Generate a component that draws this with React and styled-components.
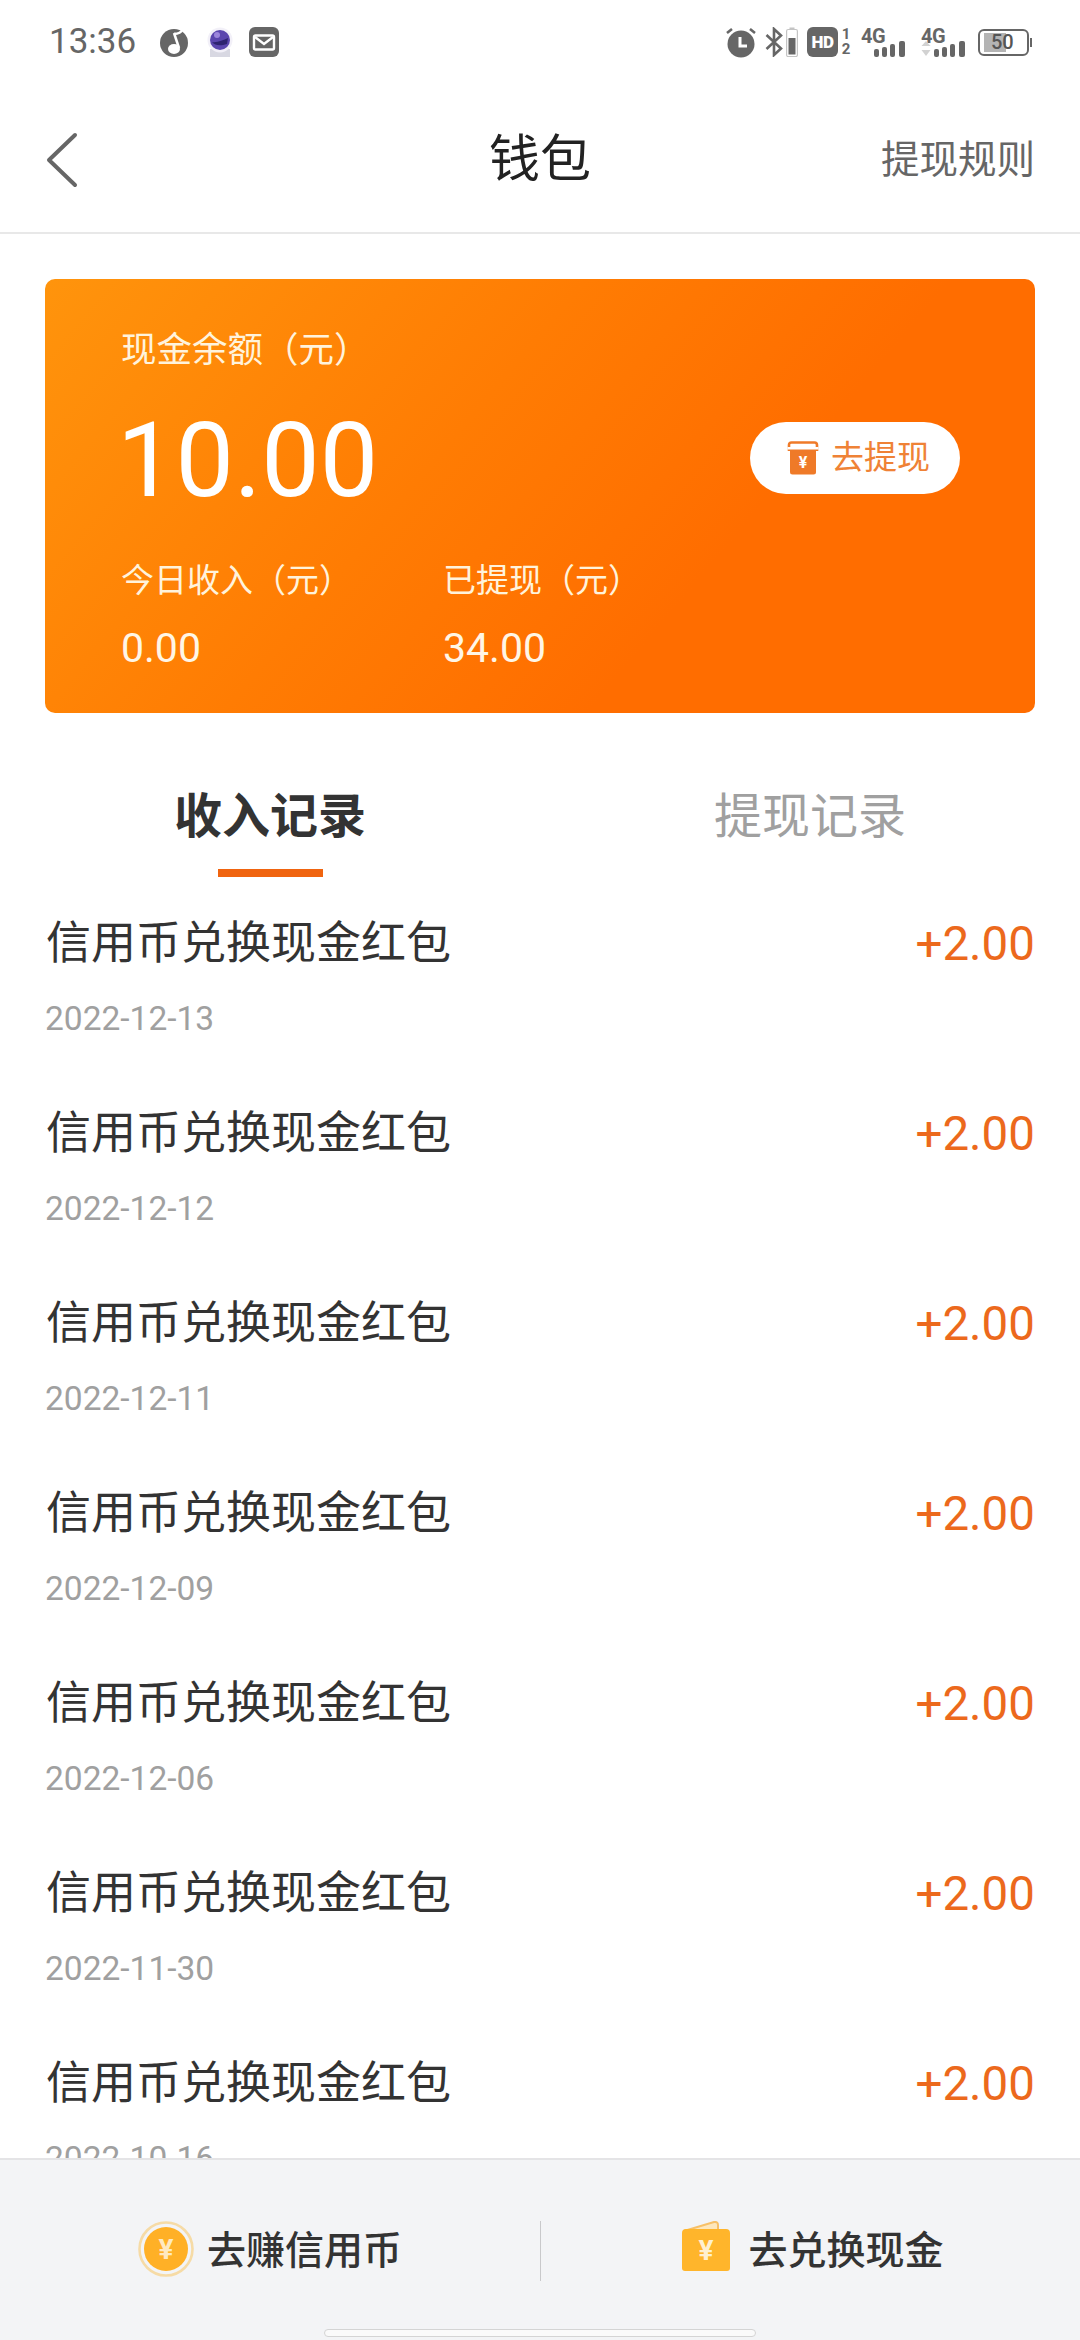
import React from "react";
import styled, { createGlobalStyle } from "styled-components";

const GlobalStyle = createGlobalStyle`
  html, body {
    margin: 0;
    padding: 0;
    background: #ffffff;
  }
  * {
    box-sizing: border-box;
  }
`;

const FONT = `Roboto, "Noto Sans CJK SC", sans-serif`;

const Page = styled.div`
  width: 1080px;
  height: 2340px;
  display: flex;
  flex-direction: column;
  overflow: hidden;
  background: #ffffff;
  font-family: ${FONT};
`;

const StatusBar = styled.div`
  height: 80px;
  flex: none;
  display: flex;
  align-items: center;
  justify-content: space-between;
  padding: 4px 48px 0 49px;
  color: #666666;
`;

const StatusGroup = styled.div`
  display: flex;
  align-items: center;
`;

const Time = styled.span`
  font-size: 35px;
  line-height: 40px;
  margin-right: 23px;
`;

const NetLabel = styled.span`
  position: absolute;
  left: 0;
  top: 0;
  font-size: 20px;
  line-height: 18px;
  font-weight: 700;
  letter-spacing: -0.5px;
`;

const NetSlot = styled.div`
  position: relative;
  width: 48px;
  height: 30px;
  margin-left: ${(p) => p.$gap}px;
`;

const SimNums = styled.div`
  display: flex;
  flex-direction: column;
  align-items: center;
  margin-left: 2px;
  font-size: 15px;
  line-height: 15px;
  font-weight: 700;
  width: 12px;
`;

const HdBadge = styled.span`
  width: 31px;
  height: 30px;
  margin-left: 9px;
  border-radius: 6px;
  background: #666666;
  color: #ffffff;
  font-size: 17px;
  line-height: 30px;
  font-weight: 900;
  text-align: center;
  letter-spacing: -0.5px;
`;

const BatteryBox = styled.div`
  position: relative;
  width: 51px;
  height: 27px;
  margin-left: 9px;
  border: 2px solid #666666;
  border-radius: 6px;
  padding: 2px;
`;

const BatteryFill = styled.div`
  height: 100%;
  width: 52%;
  margin-left: 2px;
  background: #b4b4b4;
`;

const BatteryText = styled.span`
  position: absolute;
  left: 11px;
  top: 0;
  font-size: 20px;
  line-height: 23px;
  font-weight: 500;
  color: #555555;
`;

const BatteryCap = styled.div`
  width: 2px;
  height: 9px;
  margin-left: 1px;
  background: #666666;
`;

const Header = styled.header`
  position: relative;
  height: 154px;
  flex: none;
  display: flex;
  align-items: center;
  justify-content: space-between;
  padding: 8px 45px 0 45px;
  border-bottom: 2px solid #e8e8e8;
`;

const BackButton = styled.div`
  display: flex;
  width: 34px;
`;

const Title = styled.h1`
  position: absolute;
  left: 0;
  right: 0;
  margin: 0;
  text-align: center;
  font-size: 51px;
  line-height: 60px;
  font-weight: 400;
  color: #222222;
  pointer-events: none;
`;

const RuleLink = styled.span`
  font-size: 38.5px;
  line-height: 50px;
  color: #666666;
`;

const Card = styled.section`
  flex: none;
  margin: 45px 45px 0;
  height: 434px;
  padding: 51px 75px 0 76px;
  border-radius: 10px;
  color: #ffffff;
  background: linear-gradient(130deg, #ff940c 0%, #ff7c03 40%, #ff6d00 67%, #ff6d00 100%);
`;

const CardLabel = styled.div`
  font-size: ${(p) => p.$size || 33}px;
  line-height: 40px;
  color: #fff3dc;
`;

const BalanceRow = styled.div`
  display: flex;
  align-items: center;
  justify-content: space-between;
  margin-top: 36px;
  height: 110px;
`;

const Balance = styled.div`
  margin-left: -4px;
  font-size: 104px;
  line-height: 110px;
`;

const WithdrawButton = styled.div`
  display: flex;
  align-items: center;
  height: 72px;
  width: 210px;
  margin-top: -6px;
  padding-left: 36px;
  border-radius: 36px;
  background: #ffffff;
  color: #ef8236;
  font-size: 33px;
`;

const WithdrawText = styled.span`
  margin-left: 11px;
  line-height: 40px;
`;

const Stats = styled.div`
  display: grid;
  grid-template-columns: 322px 322px;
  margin-top: 45px;
`;

const StatValue = styled.div`
  margin-top: 24px;
  font-size: 41px;
  line-height: 46px;
  color: #fff6e6;
`;

const Tabs = styled.div`
  flex: none;
  display: grid;
  grid-template-columns: 1fr 1fr;
  height: 164px;
  padding-top: 74px;
`;

const Tab = styled.div`
  display: flex;
  flex-direction: column;
  align-items: center;
  font-size: 48px;
  line-height: 60px;
  font-weight: ${(p) => (p.$active ? 700 : 400)};
  color: ${(p) => (p.$active ? "#333333" : "#a0a0a0")};
`;

const TabMark = styled.div`
  width: 105px;
  height: 8px;
  margin-top: 22px;
  background: #f0640f;
`;

const List = styled.div`
  flex: 1;
  min-height: 0;
  overflow: hidden;
`;

const Record = styled.div`
  height: 190px;
  padding: 37px 45px 0 46px;
`;

const RecordTop = styled.div`
  display: flex;
  justify-content: space-between;
  align-items: center;
  height: 60px;
`;

const RecordName = styled.span`
  font-size: 45px;
  line-height: 60px;
  color: #333333;
`;

const Amount = styled.span`
  font-size: 47.5px;
  line-height: 60px;
  color: #ec691c;
`;

const RecordDate = styled.div`
  margin-top: 25px;
  margin-left: -1px;
  font-size: 33.5px;
  line-height: 40px;
  color: #a0a0a0;
`;

const Footer = styled.footer`
  position: relative;
  flex: none;
  height: 182px;
  display: grid;
  grid-template-columns: 1fr 1fr;
  padding-top: 61px;
  background: #f3f4f6;
  border-top: 2px solid #e4e4e6;
`;

const FooterAction = styled.div`
  display: flex;
  align-items: flex-start;
  justify-content: center;
  height: 60px;
  padding-left: ${(p) => p.$shift || 0}px;
  font-size: 39px;
  line-height: 60px;
  font-weight: 500;
  color: #333333;
  border-left: ${(p) => (p.$divided ? "1px solid #c9c9cb" : "none")};
`;

const ActionText = styled.span`
  margin-left: ${(p) => p.$gap}px;
`;

const HomeIndicator = styled.div`
  position: absolute;
  left: 324px;
  bottom: 3px;
  width: 432px;
  height: 8px;
  border-radius: 4px;
  background: #fafafa;
  border: 1px solid #d4d4d4;
`;

const MusicIcon = () => (
  <svg width="30" height="32" viewBox="0 0 30 32">
    <circle cx="15" cy="17" r="14" fill="#666666" />
    <path d="M15 7 L20 22" stroke="#ffffff" strokeWidth="2.5" />
    <path d="M15 8 C18 8 22 7 24 3" stroke="#ffffff" strokeWidth="2.5" fill="none" />
    <ellipse cx="15" cy="23" rx="6" ry="5" fill="#ffffff" />
  </svg>
);

const CameraIcon = () => (
  <svg width="26" height="30" viewBox="0 0 26 30" style={{ marginLeft: 18 }}>
    <rect x="3" y="22" width="20" height="8" fill="#d8d8e2" />
    <circle cx="13" cy="13" r="12.5" fill="#f2f0f8" />
    <circle cx="13" cy="13" r="10" fill="#5b46ae" />
    <path d="M5 15 C10 16 16 13 21 11 L20 17 C14 19 8 19 5 15Z" fill="#2e2370" />
    <circle cx="10" cy="8" r="3" fill="#9c86dc" />
  </svg>
);

const MailIcon = () => (
  <svg width="30" height="30" viewBox="0 0 30 30" style={{ marginLeft: 16 }}>
    <rect width="30" height="30" rx="6" fill="#666666" />
    <rect x="5" y="8.5" width="20" height="14" rx="1.5" fill="none" stroke="#ffffff" strokeWidth="2.4" />
    <path d="M6 10 L15 17 L24 10" fill="none" stroke="#ffffff" strokeWidth="2.4" />
  </svg>
);

const AlarmIcon = () => (
  <svg width="30" height="32" viewBox="0 0 30 32">
    <circle cx="15" cy="18" r="13.5" fill="#666666" />
    <path d="M1 7 L6 3 M29 7 L24 3" stroke="#666666" strokeWidth="2.6" />
    <path d="M14 11 V20 H21" fill="none" stroke="#ffffff" strokeWidth="3" />
  </svg>
);

const BluetoothIcon = () => (
  <svg width="18" height="30" viewBox="0 0 18 30" style={{ marginLeft: 9 }}>
    <path d="M1.5 8 L16 21.5 L9 28 V2 L16 8.5 L1.5 22" fill="none" stroke="#666666" strokeWidth="2.6" />
  </svg>
);

const SmallBattery = () => (
  <svg width="12" height="30" viewBox="0 0 12 30" style={{ marginLeft: 3 }}>
    <rect x="0.6" y="2.5" width="10.8" height="27" rx="1.5" fill="none" stroke="#c4c4c4" strokeWidth="1.2" />
    <rect x="3.5" y="0.5" width="5" height="2" fill="#c4c4c4" />
    <rect x="2.5" y="11" width="7" height="16.5" fill="#666666" />
  </svg>
);

const SignalBars = ({ arrows }) => (
  <svg width="48" height="30" viewBox="0 0 48 30" style={{ position: "absolute", left: 0, top: 0 }}>
    {arrows && (
      <g>
        <path d="M5 14 L9.5 19 H0.5Z" fill="#d2d2d2" />
        <path d="M0.5 23 H9.5 L5 29Z" fill="#d2d2d2" />
      </g>
    )}
    <rect x="13" y="22" width="5" height="8" rx="2" fill="#666666" />
    <rect x="21" y="20" width="5" height="10" rx="2" fill="#666666" />
    <rect x="29" y="17" width="5" height="13" rx="2" fill="#666666" />
    <rect x="38" y="14" width="6" height="16" rx="2" fill="#666666" />
  </svg>
);

const BackIcon = () => (
  <svg width="34" height="56" viewBox="0 0 34 56">
    <path d="M30 3 L4 28 L30 53" fill="none" stroke="#666666" strokeWidth="4" strokeLinecap="round" strokeLinejoin="round" />
  </svg>
);

const BoxIcon = () => (
  <svg width="34" height="34" viewBox="0 0 34 34">
    <path d="M3 10 V4 Q3 1.5 5.5 1.5 H28.5 Q31 1.5 31 4 V10" fill="none" stroke="#ef7a28" strokeWidth="2.6" />
    <path d="M4 7.5 H30 V31 Q30 33.5 27.5 33.5 H6.5 Q4 33.5 4 31Z" fill="#ef7a28" />
    <rect x="1.5" y="6" width="31" height="2.5" fill="#ffffff" />
    <text x="17" y="27" fontSize="16" fontWeight="700" textAnchor="middle" fill="#ffffff" fontFamily="Roboto, sans-serif">¥</text>
  </svg>
);

const CoinIcon = () => (
  <svg width="56" height="56" viewBox="0 0 56 56">
    <circle cx="28" cy="28" r="26.5" fill="none" stroke="#f6dba6" strokeWidth="2.6" />
    <circle cx="28" cy="28" r="22" fill="#ffb026" />
    <text x="28" y="38" fontSize="28" fontWeight="700" textAnchor="middle" fill="#ffe9c0" fontFamily="Roboto, sans-serif">¥</text>
  </svg>
);

const WalletIcon = () => (
  <svg width="48" height="50" viewBox="0 0 48 50">
    <path d="M2 10 L32 1 Q36 0.5 36 4 V10" fill="#fde7bc" stroke="#f7c067" strokeWidth="2" />
    <path d="M0 12 Q0 8 4 8 H44 Q48 8 48 12 V47 Q48 50 45 50 H3 Q0 50 0 47Z" fill="#ffb52b" />
    <text x="24" y="39" fontSize="28" fontWeight="700" textAnchor="middle" fill="#fff0d0" fontFamily="Roboto, sans-serif">¥</text>
  </svg>
);

const records = [
  "2022-12-13",
  "2022-12-12",
  "2022-12-11",
  "2022-12-09",
  "2022-12-06",
  "2022-11-30",
  "2022-10-16",
];

const App = () => {
  return (
    <Page>
      <GlobalStyle />
      <StatusBar>
        <StatusGroup>
          <Time>13:36</Time>
          <MusicIcon />
          <CameraIcon />
          <MailIcon />
        </StatusGroup>
        <StatusGroup>
          <AlarmIcon />
          <BluetoothIcon />
          <SmallBattery />
          <HdBadge>HD</HdBadge>
          <SimNums>
            <span>1</span>
            <span>2</span>
          </SimNums>
          <NetSlot $gap={9}>
            <NetLabel>4G</NetLabel>
            <SignalBars />
          </NetSlot>
          <NetSlot $gap={12}>
            <NetLabel>4G</NetLabel>
            <SignalBars arrows />
          </NetSlot>
          <BatteryBox>
            <BatteryFill />
            <BatteryText>50</BatteryText>
          </BatteryBox>
          <BatteryCap />
        </StatusGroup>
      </StatusBar>

      <Header>
        <BackButton>
          <BackIcon />
        </BackButton>
        <Title>钱包</Title>
        <RuleLink>提现规则</RuleLink>
      </Header>

      <Card>
        <CardLabel $size={35.5}>现金余额（元）</CardLabel>
        <BalanceRow>
          <Balance>10.00</Balance>
          <WithdrawButton>
            <BoxIcon />
            <WithdrawText>去提现</WithdrawText>
          </WithdrawButton>
        </BalanceRow>
        <Stats>
          <div>
            <CardLabel>今日收入（元）</CardLabel>
            <StatValue>0.00</StatValue>
          </div>
          <div>
            <CardLabel>已提现（元）</CardLabel>
            <StatValue>34.00</StatValue>
          </div>
        </Stats>
      </Card>

      <Tabs>
        <Tab $active>
          收入记录
          <TabMark />
        </Tab>
        <Tab>提现记录</Tab>
      </Tabs>

      <List>
        {records.map((date) => (
          <Record key={date}>
            <RecordTop>
              <RecordName>信用币兑换现金红包</RecordName>
              <Amount>+2.00</Amount>
            </RecordTop>
            <RecordDate>{date}</RecordDate>
          </Record>
        ))}
      </List>

      <Footer>
        <FooterAction>
          <CoinIcon />
          <ActionText $gap={13}>去赚信用币</ActionText>
        </FooterAction>
        <FooterAction $divided $shift={5}>
          <WalletIcon />
          <ActionText $gap={18}>去兑换现金</ActionText>
        </FooterAction>
        <HomeIndicator />
      </Footer>
    </Page>
  );
};

export default App;
